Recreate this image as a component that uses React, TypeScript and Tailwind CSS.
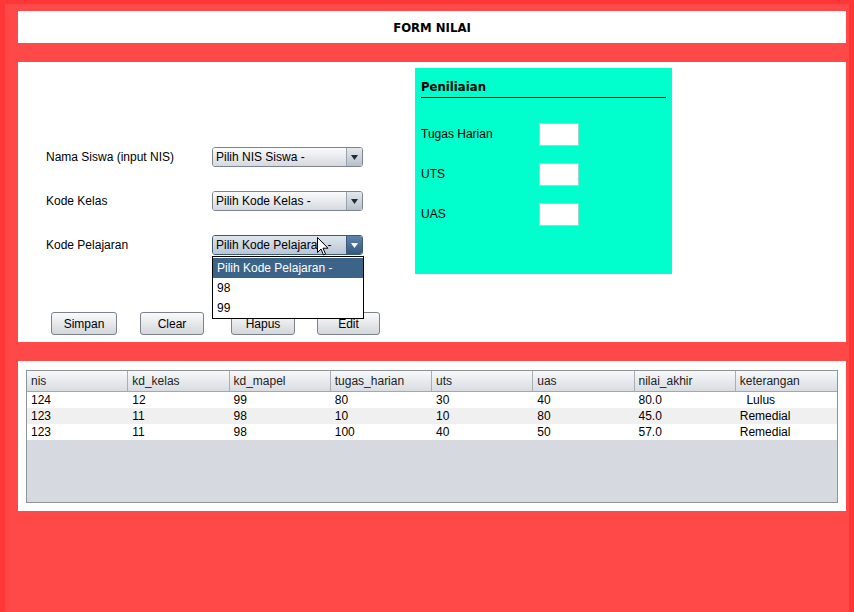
import React from "react";

const font = { fontFamily: '"Liberation Sans", Arial, sans-serif' };

function Combo({ text, focused }: { text: string; focused?: boolean }) {
  return (
    <div
      className={
        "flex h-[20px] w-[151px] items-stretch overflow-hidden rounded-[3px] border " +
        (focused ? "border-[#3c5a78]" : "border-[#7d8590]")
      }
    >
      <div
        className={
          "flex flex-1 items-center whitespace-nowrap pl-[3px] text-[12px] text-black " +
          (focused
            ? "bg-gradient-to-b from-[#dfe6ee] to-[#b9c6d4]"
            : "bg-gradient-to-b from-[#fbfbfc] to-[#d5d9df]")
        }
      >
        {text}
      </div>
      <div
        className={
          "flex w-[16px] items-center justify-center border-l " +
          (focused
            ? "border-[#3c5a78] bg-gradient-to-b from-[#5e84aa] to-[#33597f]"
            : "border-[#9aa2ab] bg-gradient-to-b from-[#e4e8ed] to-[#b7c0ca]")
        }
      >
        <svg width="7" height="5" viewBox="0 0 7 5">
          <path d="M0 0 H7 L3.5 5 Z" fill={focused ? "#ffffff" : "#1d2a3a"} />
        </svg>
      </div>
    </div>
  );
}

function Btn({ text }: { text: string }) {
  return (
    <div className="flex h-[23px] items-center justify-center rounded-[3px] border border-[#7b828a] bg-gradient-to-b from-[#fafafa] to-[#d3d7dc] text-[12px] text-black">
      {text}
    </div>
  );
}

const cols = ["nis", "kd_kelas", "kd_mapel", "tugas_harian", "uts", "uas", "nilai_akhir", "keterangan"];
const rows = [
  ["124", "12", "99", "80", "30", "40", "80.0", "  Lulus"],
  ["123", "11", "98", "10", "10", "80", "45.0", "Remedial"],
  ["123", "11", "98", "100", "40", "50", "57.0", "Remedial"],
];

export default function App() {
  return (
    <div style={font} className="flex h-[612px] w-[854px] flex-col bg-[#ff3636] pl-[5px] pr-[5px] pt-[4px]">
      <div className="flex flex-1 flex-col bg-[#ff4949] pl-[13px] pr-[3px] pt-[7px]">
        {/* Title */}
        <div className="flex h-[32px] items-center justify-center bg-white pt-[1px]">
          <span className="text-[13px] font-bold text-black" style={{ fontFamily: '"DejaVu Sans Condensed", "DejaVu Sans", sans-serif' }}>
            FORM NILAI
          </span>
        </div>

        {/* Form panel */}
        <div className="relative mt-[19px] flex h-[280px] bg-white">
          <div className="flex w-[397px] flex-col pl-[28px]">
            <div className="mt-[85px] flex flex-col gap-[24px]">
              {[
                ["Nama Siswa (input NIS)", "Pilih NIS Siswa -", false],
                ["Kode Kelas", "Pilih Kode Kelas -", false],
                ["Kode Pelajaran", "Pilih Kode Pelajaran -", true],
              ].map(([l, t, f]) => (
                <div key={l as string} className="flex items-center">
                  <span className="w-[166px] text-[12px] text-black">{l as string}</span>
                  <Combo text={t as string} focused={f as boolean} />
                </div>
              ))}
            </div>
            <div className="mt-[57px] flex">
              <div className="ml-[5px] w-[66px]"><Btn text="Simpan" /></div>
              <div className="ml-[23px] w-[64px]"><Btn text="Clear" /></div>
              <div className="ml-[27px] w-[64px]"><Btn text="Hapus" /></div>
              <div className="ml-[22px] w-[63px]"><Btn text="Edit" /></div>
            </div>
          </div>

          {/* Penilaian */}
          <div className="mt-[6px] flex h-[206px] w-[257px] flex-col bg-[#00ffcc] px-[6px]">
            <div className="mt-[9px] text-[13px] font-bold text-black" style={{ fontFamily: '"DejaVu Sans Condensed", "DejaVu Sans", sans-serif' }}>
              Peniliaian
            </div>
            <div className="mt-[0px] h-[1px] w-[245px] bg-black" />
            <div className="mt-[25px] flex flex-col gap-[17px]">
              {["Tugas Harian", "UTS", "UAS"].map((l) => (
                <div key={l} className="flex items-center">
                  <span className="w-[118px] text-[12px] text-black">{l}</span>
                  <div className="h-[23px] w-[40px] border border-[#9fd9cc] bg-white" />
                </div>
              ))}
            </div>
          </div>

          {/* Dropdown popup */}
          <div className="absolute left-[194px] top-[194px] z-10 w-[152px] border border-black bg-white pt-[1px] text-[12px] text-black">
            <div className="flex h-[20px] items-center bg-[#3b6488] pl-[4px] text-white">Pilih Kode Pelajaran -</div>
            <div className="flex h-[20px] items-center pl-[4px]">98</div>
            <div className="flex h-[20px] items-center pl-[4px]">99</div>
          </div>

          {/* cursor */}
          <svg className="absolute left-[299px] top-[175px] z-20" width="12" height="19" viewBox="0 0 12 19">
            <path d="M0.5 0.5 V15.5 L4 12 L6.5 18 L8.5 17 L6 11.2 H11 Z" fill="#ffffff" stroke="#000000" strokeWidth="1" />
          </svg>
        </div>

        {/* Table panel */}
        <div className="mt-[19px] flex h-[150px] flex-col bg-white px-[8px] pt-[9px]">
          <div className="flex h-[133px] flex-col border border-[#8e939a] bg-[#d6d9e0]">
            <div className="grid h-[21px] grid-cols-8 border-b border-[#a3a8ae] bg-gradient-to-b from-[#f7f8f9] to-[#d9dde2]">
              {cols.map((c, i) => (
                <div
                  key={c}
                  className={"flex items-center pl-[4px] text-[12px] text-[#222] " + (i < 7 ? "border-r border-[#a9aeb4]" : "")}
                >
                  {c}
                </div>
              ))}
            </div>
            {rows.map((r, ri) => (
              <div key={ri} className={"grid h-[16px] grid-cols-8 " + (ri === 1 ? "bg-[#f0f0f0]" : "bg-white")}>
                {r.map((v, ci) => (
                  <div key={ci} className="flex items-center whitespace-pre pl-[4px] text-[12px] leading-none text-black">
                    {v}
                  </div>
                ))}
              </div>
            ))}
          </div>
        </div>
      </div>
    </div>
  );
}
